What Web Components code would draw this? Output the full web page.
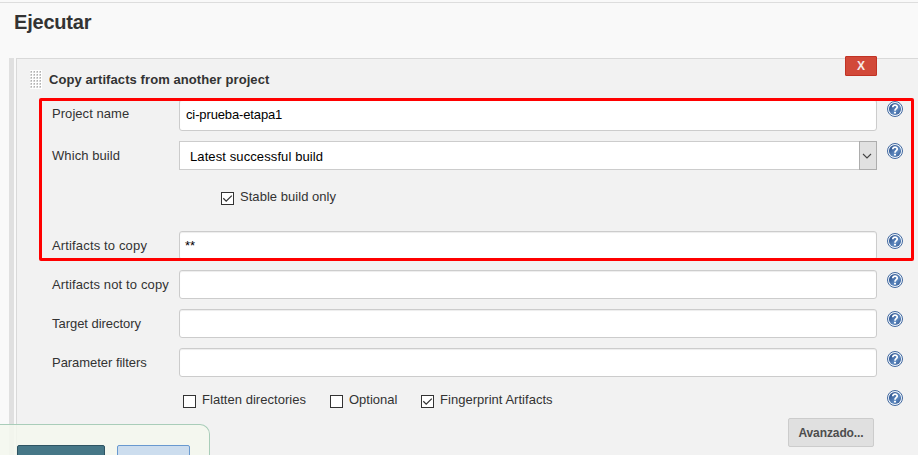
<!DOCTYPE html>
<html lang="es"><head><meta charset="utf-8"><title>Ejecutar</title>
<style>
html,body{margin:0;height:455px;overflow:hidden;background:#f9f9f9}
body{font:13px "Liberation Sans",Arial,sans-serif;color:#333}
</style></head><body>
<build-page></build-page>
<script>
const define=(name,html,setup)=>customElements.define(name,class extends HTMLElement{
  connectedCallback(){
    if(this.shadowRoot)return;
    const t=document.createElement('template');t.innerHTML=html;
    this.attachShadow({mode:'open'}).append(t.content.cloneNode(true));
    if(setup)setup(this,this.shadowRoot);
  }
});
const fit=(host,root,sel)=>{if(host.hasAttribute('spacing'))root.querySelector(sel).style.letterSpacing=host.getAttribute('spacing')};

define('help-icon',`<style>:host{display:block;width:16px;height:16px}svg{display:block}</style>
<svg width="16" height="16" viewBox="0 0 16 16"><defs><linearGradient id="g" x1="0" y1="0" x2="1" y2="1"><stop offset="0" stop-color="#1f4380"/><stop offset=".6" stop-color="#5f8ac0"/><stop offset="1" stop-color="#2b528e"/></linearGradient></defs>
<circle cx="8" cy="8" r="7.5" fill="#f4f8fc" stroke="#41689f" stroke-width="1"/><circle cx="8" cy="8" r="6.1" fill="url(#g)"/>
<path d="M5.8 6.2C5.7 3.3 10.4 3.4 10.2 6.1C10.1 7.6 8 7.7 8 9.7" fill="none" stroke="#fff" stroke-width="1.75"/><rect x="7" y="10.8" width="2" height="1.7" fill="#fff"/></svg>`);

define('check-option',`<style>:host{display:flex;align-items:flex-start;height:17px;line-height:15px;white-space:nowrap}
i{box-sizing:border-box;width:13px;height:13px;border:1px solid #333;background:#fff;margin:3px 6px 0 0;flex:none}svg{display:none}:host([checked]) svg{display:block}</style>
<i><svg width="11" height="11" viewBox="0 0 11 11"><path d="M1.3 5.3L4.2 8.2L9.8 2.6" fill="none" stroke="#333" stroke-width="1.25"/></svg></i><span><slot></slot></span>`,(h,r)=>fit(h,r,'span'));

define('text-box',`<style>:host{display:flex;align-items:center;box-sizing:border-box;height:29px;border:1px solid #ccc;border-radius:3px;background:#fff;color:#000;box-shadow:inset 0 1px 1px #00000013;padding:0 6px}</style><span><slot></slot></span>`,(h,r)=>fit(h,r,'span'));

define('select-box',`<style>:host{display:flex;justify-content:space-between;box-sizing:border-box;height:29px;border:1px solid #ccc;background:#fff;color:#000;padding-left:10px;line-height:29px}
b{box-sizing:border-box;width:18px;height:29px;margin-top:-1px;margin-right:-1px;border:1px solid #adadad;background:#e1e1e1;display:grid;place-items:center}svg{margin-left:-2px}</style>
<span><slot></slot></span><b><svg width="10" height="6" viewBox="0 0 10 6"><path d="M1 1L5 5L9 1" fill="none" stroke="#444" stroke-width="1.1"/></svg></b>`,(h,r)=>fit(h,r,'span'));

define('form-row',`<style>:host{display:grid;grid-template-columns:127px 698px 16px;height:29px;align-items:start}
label{line-height:29px;white-space:nowrap}help-icon{margin:2px 0 0 10px}:host([low]) help-icon{margin-top:3px}</style>
<label></label><slot></slot><help-icon></help-icon>`,(h,r)=>{r.querySelector('label').textContent=h.getAttribute('label')||'';fit(h,r,'label')});

define('action-button',`<style>:host{display:grid;place-items:center;box-sizing:border-box;font-weight:bold;border:1px solid #ccc;border-radius:2px;background:#e0e0e0;color:#4d4d4d}</style><span><slot></slot></span>`,(h,r)=>fit(h,r,'span'));

define('drag-grip',`<style>:host{display:block;width:12px;height:19px;background:#fff}svg{display:block}</style><svg width="12" height="19"><defs><pattern id="p" x="0" y="1" width="3" height="3" patternUnits="userSpaceOnUse"><rect width="2" height="2" fill="#ddd"/><rect x="1" width="1" height="1" fill="#b0b0b0"/><rect x="1" y="1" width="1" height="1" fill="#ccc"/></pattern></defs><rect x="0" y="1" width="12" height="18" fill="url(#p)"/></svg>`);

define('builder-panel',`<style>
:host{display:flex;box-sizing:border-box;height:397px;padding-left:9px;gap:2px}
.bar{width:5px;background:#e0e0e0}
.panel{flex:1;box-sizing:border-box;border:solid #d9d9d9;border-width:1px 0 0 1px;background:#f2f2f2}
header{display:flex;height:40px;padding-left:13px}
drag-grip{margin-top:11px}h2{font-size:13px;line-height:16px;margin:13px 0 0 7px;color:#333;flex:1;letter-spacing:.085px}
.x{width:32px;height:20px;margin:-3px 41px 0 0;background:#d24939;border-color:#c13325;border-radius:1px;color:#f7e9e7;font-size:12px}
.rows{padding-left:35px;display:grid;row-gap:10px}
.first{height:32px}.first text-box{height:32px;padding-bottom:2px}
.stable{padding-left:169px;height:41px;padding-top:9px;box-sizing:border-box}
.stars{padding-left:5px}
.checks{display:grid;grid-template-columns:147px 91px 466px 16px;padding-left:131px;margin-top:3px}
.checks check-option{margin-top:2px}
.adv{width:86px;height:29px;margin:9px 0 0 771px;font-size:12px}
</style>
<div class="bar"></div><section class="panel">
<header><drag-grip></drag-grip><h2>Copy artifacts from another project</h2><action-button class="x">X</action-button></header>
<div class="rows">
<form-row class="first" label="Project name" spacing=".05px"><text-box spacing="-.13px">ci-prueba-etapa1</text-box></form-row>
<form-row label="Which build" spacing=".08px"><select-box spacing=".1px">Latest successful build</select-box></form-row>
<div class="stable"><check-option checked spacing=".04px">Stable build only</check-option></div>
<form-row label="Artifacts to copy" spacing=".15px"><text-box class="stars">**</text-box></form-row>
<form-row label="Artifacts not to copy" spacing=".13px"><text-box></text-box></form-row>
<form-row label="Target directory" spacing="-.04px"><text-box></text-box></form-row>
<form-row low label="Parameter filters" spacing="-.04px"><text-box></text-box></form-row>
<div class="checks"><check-option spacing=".04px">Flatten directories</check-option><check-option>Optional</check-option><check-option checked spacing=".03px">Fingerprint Artifacts</check-option><help-icon></help-icon></div>
</div><action-button class="adv" spacing="-.1px">Avanzado...</action-button></section>`);

define('save-bar',`<style>:host{position:absolute;left:0;top:424px;box-sizing:border-box;width:210px;height:40px;border:solid #a9cdb9;border-width:1px 1px 0 0;border-radius:0 10px 0 0;background:#f4f8efd8;display:flex;gap:12px;padding:20px 0 0 17px}
i{box-sizing:border-box;width:88px;height:30px;border:1px solid #2e5463;border-radius:2px;background:#467787}i+i{width:73px;border-color:#6899d0;background:#ccddee}</style><i></i><i></i>`);

define('highlight-frame',`<style>:host{position:absolute;left:39px;top:98px;box-sizing:border-box;width:875px;height:163px;border:3px solid #f00;border-radius:2px}</style>`);

define('build-page',`<style>:host{display:block;position:relative;width:918px;height:455px;overflow:hidden;background:#f9f9f9}
.top{height:58px;box-sizing:border-box;padding-top:2px}.line{height:1px;background:#ddd}
h1{margin:7px 0 0 14px;font-size:20px;line-height:24px;color:#333;letter-spacing:-.2px}</style>
<div class="top"><div class="line"></div><h1>Ejecutar</h1></div><builder-panel></builder-panel><save-bar></save-bar><highlight-frame></highlight-frame>`);
</script></body></html>
